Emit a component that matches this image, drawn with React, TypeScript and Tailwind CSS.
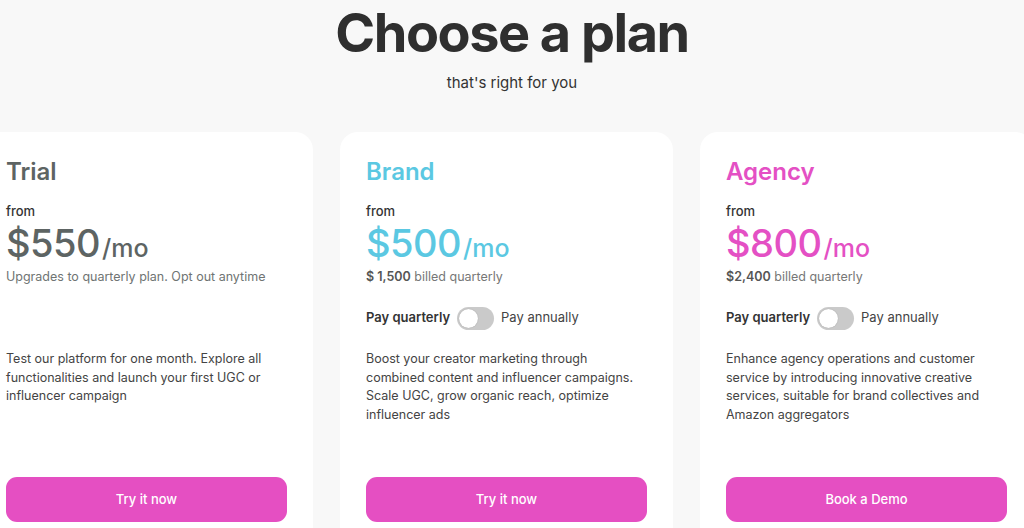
const plans = [
    {
        name: "Trial",
        color: "text-[#5d6463]",
        price: "$550",
        note: <span className="text-[#6f7473]">Upgrades to quarterly plan. Opt out anytime</span>,
        toggle: false,
        description: "Test our platform for one month. Explore all functionalities and launch your first UGC or influencer campaign",
        cta: "Try it now",
    },
    {
        name: "Brand",
        color: "text-[#5bc8e2]",
        price: "$500",
        note: (
            <>
                <span className="font-semibold text-[#555]">$ 1,500</span>{" "}
                <span className="text-[#777]">billed quarterly</span>
            </>
        ),
        toggle: true,
        description: "Boost your creator marketing through combined content and influencer campaigns. Scale UGC, grow organic reach, optimize influencer ads",
        cta: "Try it now",
    },
    {
        name: "Agency",
        color: "text-[#e450c4]",
        price: "$800",
        note: (
            <>
                <span className="font-semibold text-[#555]">$2,400</span>{" "}
                <span className="text-[#777]">billed quarterly</span>
            </>
        ),
        toggle: true,
        description: "Enhance agency operations and customer service by introducing innovative creative services, suitable for brand collectives and Amazon aggregators",
        cta: "Book a Demo",
    },
];

const Toggle = () => (
    <div className="flex items-center gap-[7px] h-[24px] text-[13px]">
        <span className="font-semibold text-[#333]">Pay quarterly</span>
        <span className="w-[37px] h-[23px] rounded-full bg-[#cacaca] p-[2px] flex items-center">
            <span className="w-[19px] h-[19px] rounded-full bg-white shadow-[0_0_1px_rgba(0,0,0,0.3)]"/>
        </span>
        <span className="text-[#444]">Pay annually</span>
    </div>
);

export default function App() {
    return (
        <div className="w-[1024px] h-[528px] overflow-hidden bg-[#f8f8f8] font-['Inter',sans-serif]">
            {/* heading */}
            <div className="flex flex-col items-center pt-[4px]">
                <h1 className="text-[54px] leading-[58px] font-bold tracking-[-1.5px] text-[#2f2f2f]">Choose a plan</h1>
                <p className="mt-[11px] text-[15px] leading-[20px] text-[#333]">that's right for you</p>
            </div>

            {/* cards */}
            <div className="flex gap-[27px] ml-[-20px] mt-[39px]">
                {plans.map(plan => (
                    <div key={plan.name}
                         className="w-[333px] shrink-0 h-[420px] bg-white rounded-[18px] px-[26px] pt-[25px] flex flex-col">
                        <h2 className={`text-[24px] leading-[30px] font-semibold ${plan.color}`}>{plan.name}</h2>
                        <div className="mt-[18px] text-[13px] leading-[12px] font-medium text-[#333]">from</div>
                        <div className={`flex items-baseline h-[52px] ${plan.color}`}>
                            <span className="text-[38px] leading-[52px] font-medium tracking-[-0.5px]">{plan.price}</span>
                            <span className="ml-[2px] text-[25px] leading-[52px] font-medium">/mo</span>
                        </div>
                        <div className="mt-[-1px] text-[12.5px] leading-[18px]">{plan.note}</div>
                        <div className="mt-[20px] h-[24px]">{plan.toggle && <Toggle/>}</div>
                        <p className="mt-[20px] text-[12.5px] leading-[18.5px] text-[#444] h-[123px]">{plan.description}</p>
                        <button
                            className="mt-[4px] w-full h-[45px] rounded-[11px] bg-[#e54fc2] text-white text-[13px] font-medium">
                            {plan.cta}
                        </button>
                    </div>
                ))}
            </div>
        </div>
    );
}
